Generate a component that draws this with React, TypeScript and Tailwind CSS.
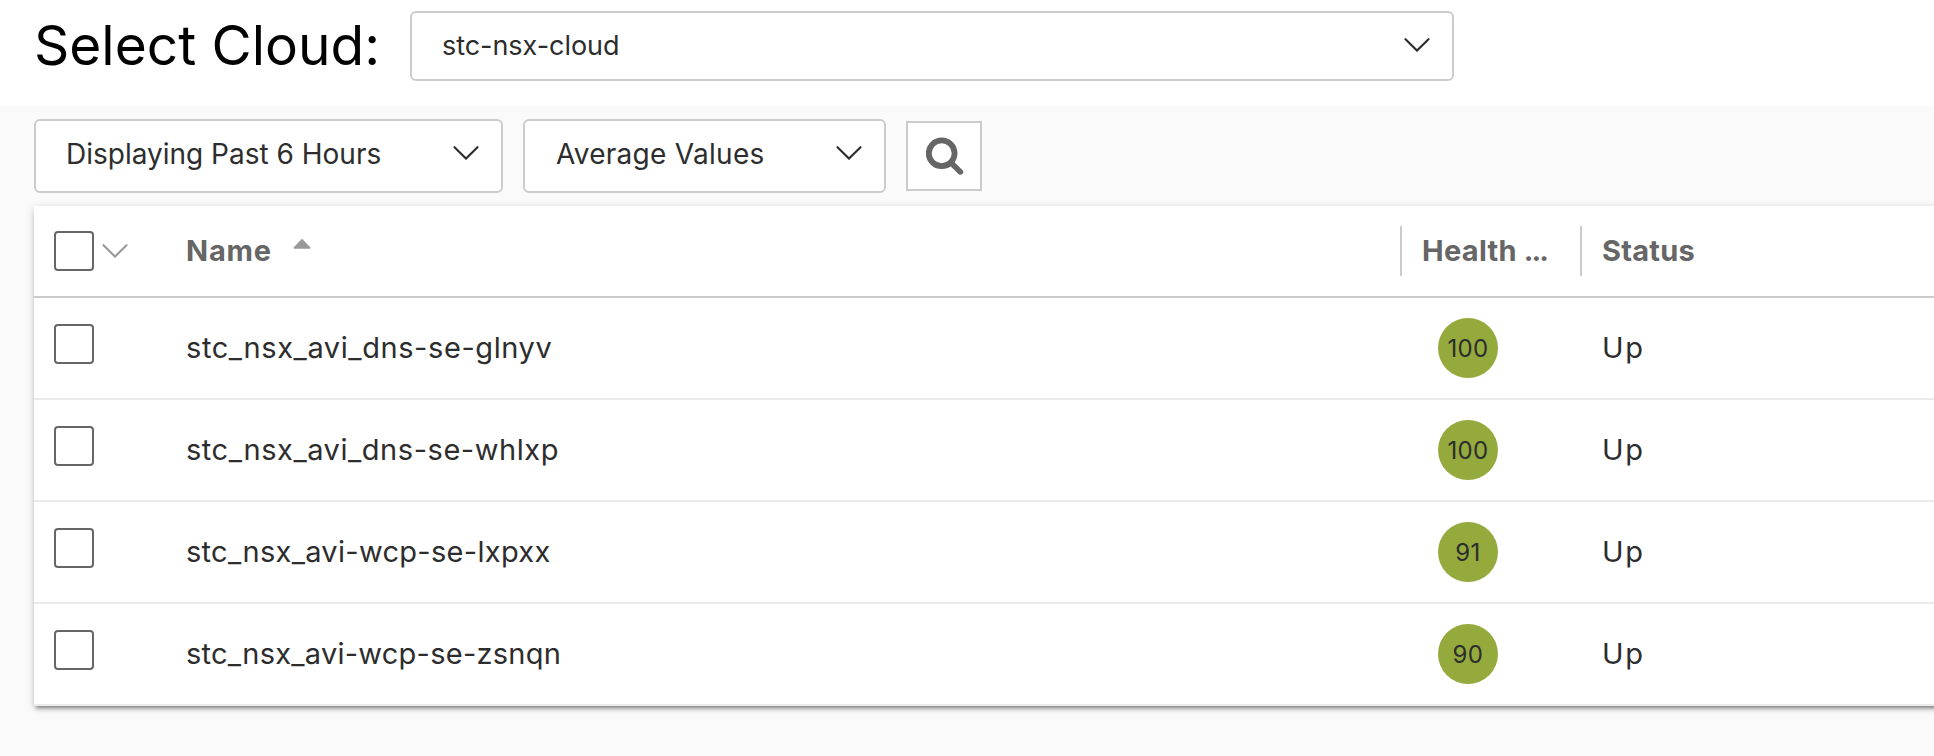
type Engine = { name: string; spacing: string; health: number; status: string };

const engines: Engine[] = [
  { name: "stc_nsx_avi_dns-se-glnyv", spacing: "tracking-[0.58px]", health: 100, status: "Up" },
  { name: "stc_nsx_avi_dns-se-whlxp", spacing: "tracking-[0.55px]", health: 100, status: "Up" },
  { name: "stc_nsx_avi-wcp-se-lxpxx", spacing: "tracking-[0.3px]", health: 91, status: "Up" },
  { name: "stc_nsx_avi-wcp-se-zsnqn", spacing: "tracking-[0.25px]", health: 90, status: "Up" },
];

function Chevron({ className }: { className: string }) {
  return (
    <svg className={className} width="26" height="14" viewBox="0 0 26 14" fill="none" stroke="currentColor" strokeWidth="2.1" strokeLinecap="round">
      <path d="M1.5 1.2 13 12.6 24.5 1.2" />
    </svg>
  );
}

function Checkbox() {
  return <span role="checkbox" aria-checked="false" className="block size-10 shrink-0 rounded-[4px] border-2 border-[#666] bg-white" />;
}

export default function App() {
  return (
    <div className="flex h-[756px] flex-col overflow-hidden bg-[#fafafa] font-['Inter',sans-serif] text-[#2d2d2d]">
      <header className="flex h-[106px] items-start bg-white pt-[11px] pl-[34px]">
        <h1 className="mt-[-1px] h-[70px] w-[376px] text-[55px] leading-[70px] whitespace-nowrap text-black">Select Cloud:</h1>
        <button className="flex h-[70px] w-[1044px] items-center justify-between rounded-md border-2 border-[#ccc] bg-white pr-[22px] pl-[30px]">
          <span className="text-[27px] tracking-[-0.05px]">stc-nsx-cloud</span>
          <Chevron className="mt-[-2px]" />
        </button>
      </header>

      <div className="flex h-[100px] items-start gap-5 pt-[13px] pl-[34px]">
        <button className="flex h-[74px] w-[469px] items-center justify-between rounded-md border-2 border-[#ccc] bg-white pr-[22px] pl-[30px]">
          <span className="mt-[-4px] text-[28px]">Displaying Past 6 Hours</span>
          <Chevron className="mt-[-6px]" />
        </button>
        <button className="flex h-[74px] w-[363px] items-center justify-between rounded-md border-2 border-[#ccc] bg-white pr-[22px] pl-[31px]">
          <span className="mt-[-4px] text-[28px] tracking-[0.28px]">Average Values</span>
          <Chevron className="mt-[-6px]" />
        </button>
        <button aria-label="Search" className="mt-0.5 flex h-[70px] w-[76px] items-start border-2 border-[#ccc] bg-white pt-[14px] pl-[18px] text-[#666]">
          <svg width="38" height="38" viewBox="0 0 38 38" fill="none" stroke="currentColor">
            <circle cx="15.7" cy="16.3" r="12.9" strokeWidth="5.8" />
            <path d="M26 26.7 34.4 34.9" strokeWidth="5.6" strokeLinecap="round" />
          </svg>
        </button>
      </div>

      <main className="mr-[-20px] ml-[34px] h-[500px] bg-white shadow-[0_4px_4px_-2px_rgba(0,0,0,0.42),0_2px_8px_rgba(0,0,0,0.18)]">
        <div className="flex h-[92px] items-center border-b-2 border-[#ccc] text-[29px] font-bold text-[#666]">
          <div className="flex w-[153px] items-center gap-2 pl-5">
            <Checkbox />
            <Chevron className="text-[#999]" />
          </div>
          <div className="flex w-[1213px] items-center">
            <span className="ml-[-1px] w-[107px] tracking-[0.8px]">Name</span>
            <svg className="mt-[-15px]" width="18" height="10" viewBox="0 0 18 10" fill="#999">
              <path d="M8.2.4a1.2 1.2 0 0 1 1.6 0L17.2 8.2Q18 9.6 16.7 9.7H1.3Q0 9.6.8 8.2Z" />
            </svg>
          </div>
          <div className="flex h-[50px] w-[180px] items-center border-l-2 border-[#ccc] pl-5">
            <span className="tracking-[0.3px]">Health</span>&nbsp;<span className="tracking-[-2px]">...</span>
          </div>
          <div className="flex h-[50px] items-center border-l-2 border-[#ccc] pl-5 tracking-[0.24px]">Status</div>
        </div>
        {engines.map((engine) => (
          <div key={engine.name} className="flex h-[102px] items-center border-b-2 border-[#eaeaea] text-[29px]">
            <div className="w-[152px] pb-2 pl-5">
              <Checkbox />
            </div>
            <div className={`w-[1214px] ${engine.spacing}`}>{engine.name}</div>
            <div className="w-[202px] pl-[38px]">
              <div className="flex size-[60px] items-center justify-center rounded-full bg-[#94aa3d] pt-px text-[24px] tracking-[0.4px] text-[#2d2d2d]">{engine.health}</div>
            </div>
            <div className="tracking-[1.6px]">{engine.status}</div>
          </div>
        ))}
      </main>
    </div>
  );
}
